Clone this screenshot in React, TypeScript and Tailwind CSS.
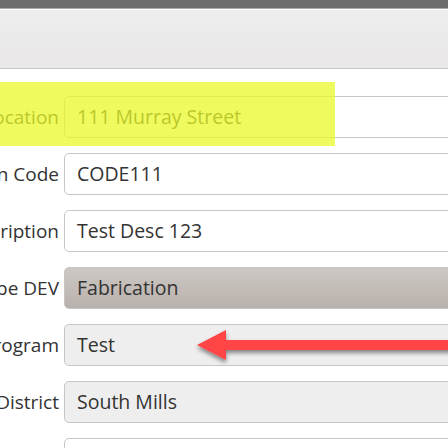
const rows = [
  { label: 'Location', value: '111 Murray Street', bg: 'bg-white' },
  { label: 'Location Code', value: 'CODE111', bg: 'bg-white' },
  { label: 'Description', value: 'Test Desc 123', bg: 'bg-white' },
  { label: 'Type DEV', value: 'Fabrication', bg: 'bg-gradient-to-b from-[#cdc8c4] to-[#b8b0ab]' },
  { label: 'Program', value: 'Test', bg: 'bg-[#eeeeee]' },
  { label: 'District', value: 'South Mills', bg: 'bg-[#eeeeee]' },
  { label: 'Notes', value: '', bg: 'bg-white' },
];

const Arrow = () => (
  <svg
    className="absolute left-[190px] top-[1px] pointer-events-none"
    width="270"
    height="48"
    viewBox="0 0 270 48"
  >
    <defs>
      <filter id="sh" x="-10%" y="-40%" width="120%" height="200%">
        <feDropShadow dx="0" dy="3" stdDeviation="2" floodColor="#000" floodOpacity="0.45" />
      </filter>
    </defs>
    <polygon
      points="7,20 36,5 36,15 270,15 270,25 36,25 36,35"
      fill="#ff4545"
      filter="url(#sh)"
    />
  </svg>
);

const Row = ({ label, value, bg, idx }: { label: string; value: string; bg: string; idx: number }) => (
  <div className="relative flex items-center h-[42px]">
    <div className="w-[180px] -ml-[121px] shrink-0 text-right whitespace-nowrap text-[19px] text-[#333]">
      {label}
    </div>
    <div
      className={`ml-[5px] w-[420px] shrink-0 h-[42px] rounded-[5px] border border-[#c6c6c6] ${bg} flex items-center pl-[12px] text-[19.5px] text-[#333]`}
    >
      {value}
    </div>
    {idx === 4 && <Arrow />}
    {idx === 0 && (
      <div className="absolute left-0 top-[-14px] w-[335px] h-[64px] bg-[rgba(232,248,40,0.75)] pointer-events-none" />
    )}
  </div>
);

export default function App() {
  return (
    <div
      className="w-[448px] h-[448px] overflow-hidden bg-white"
      style={{ fontFamily: '"Open Sans", "Noto Sans", sans-serif' }}
    >
      <div className="h-[8px] bg-[#6d6d6d]" />
      <div className="h-[1px] bg-[#a9a9a9]" />
      <div className="h-[1px] bg-white" />
      <div className="h-[59px] bg-gradient-to-b from-[#eeeded] to-[#e9e7e7] border-b border-[#c8c8c8]" />
      <div className="pt-[27px] flex flex-col gap-[15px]">
        {rows.map((r, i) => (
          <Row key={r.label} {...r} idx={i} />
        ))}
      </div>
    </div>
  );
}
